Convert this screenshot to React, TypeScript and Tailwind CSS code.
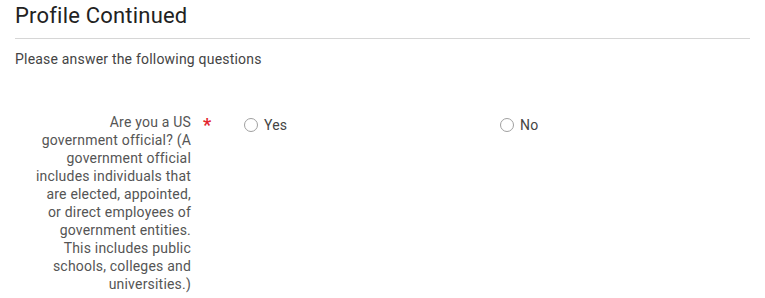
export default function App() {
  return (
    <div className="min-h-screen bg-white px-[15px] font-['Roboto',sans-serif] tracking-[0.2px]">
      <h1 className="pt-[3px] pb-[9px] text-[22px] leading-[26px] font-normal text-[#222]">Profile Continued</h1>
      <div className="w-[735px] border-t border-[#d6d6d6]" />
      <p className="mt-[11px] text-[14px] leading-[18px] text-[#444]">Please answer the following questions</p>

      <div className="mt-[45px] flex items-start">
        <label className="ml-[15px] w-[161px] shrink-0 text-right text-[14px] leading-[18px] text-[#555]">
          Are you a US government official? (A government official includes individuals that are elected, appointed, or direct employees of government entities. This includes public schools, colleges and universities.)
        </label>
        <span className="ml-[12px] mt-[3px] w-[41px] shrink-0 text-[18px] leading-[18px] font-bold text-[#e3262f]">*</span>
        <div className="grid w-[512px] shrink-0 grid-cols-2 pt-[3px]">
          <label className="flex items-center gap-[6px] text-[14px] leading-[18px] text-[#444]">
            <span className="h-[14px] w-[14px] rounded-full border border-[#a0a0a0] bg-white" />
            Yes
          </label>
          <label className="flex items-center gap-[6px] text-[14px] leading-[18px] text-[#444]">
            <span className="h-[14px] w-[14px] rounded-full border border-[#a0a0a0] bg-white" />
            No
          </label>
        </div>
      </div>
    </div>
  )
}
